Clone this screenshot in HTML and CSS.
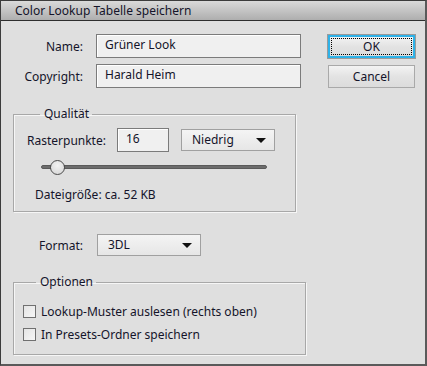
FILE: index.html
```html
<!DOCTYPE html>
<html lang="de">
<head>
    <meta charset="UTF-8">
    <title>Color Lookup Tabelle speichern</title>
    <link rel="stylesheet" href="styles.css">
</head>
<body>
    <div class="window">
        <div class="titlebar">Color Lookup Tabelle speichern</div>
        <div class="content">
            <div class="top">
                <div class="fields">
                    <div class="row">
                        <label class="label">Name:</label>
                        <div class="textbox wide">Grüner Look</div>
                    </div>
                    <div class="row">
                        <label class="label">Copyright:</label>
                        <div class="textbox wide">Harald Heim</div>
                    </div>
                </div>
                <div class="buttons">
                    <button class="btn default"><span class="focus">OK</span></button>
                    <button class="btn">Cancel</button>
                </div>
            </div>

            <fieldset class="group quality">
                <legend>Qualität</legend>
                <div class="raster-row">
                    <span class="raster-label">Rasterpunkte:</span>
                    <div class="textbox small">16</div>
                    <div class="select niedrig">Niedrig<span class="arrow"></span></div>
                </div>
                <div class="slider">
                    <div class="track"></div>
                    <div class="knob"></div>
                </div>
                <div class="filesize">Dateigröße: ca. 52 KB</div>
            </fieldset>

            <div class="row format-row">
                <label class="label">Format:</label>
                <div class="select format">3DL<span class="arrow"></span></div>
            </div>

            <fieldset class="group options">
                <legend>Optionen</legend>
                <div class="check"><span class="box"></span>Lookup-Muster auslesen (rechts oben)</div>
                <div class="check"><span class="box"></span>In Presets-Ordner speichern</div>
            </fieldset>
        </div>
    </div>
</body>
</html>
```

FILE: styles.css
```css
body {
    margin: 0;
    background: #dfdfdf;
    font-family: "Noto Sans", "DejaVu Sans", sans-serif;
    font-size: 12px;
    color: #14142a;
}
.window {
    width: 427px;
    height: 366px;
    box-sizing: border-box;
    border: 1px solid #3c3c3c;
    border-right-width: 2px;
    border-bottom-width: 2px;
    border-right-color: #5a5a5a;
    border-bottom-color: #5a5a5a;
    background: #dfdfdf;
}
.titlebar {
    height: 19px;
    line-height: 19px;
    padding-left: 14px;
    background: linear-gradient(#dadada, #aeaeae);
    border-bottom: 1px solid #2e2e2e;
    font-size: 12px;
}
.content {
    padding-top: 13px;
}
.top {
    display: flex;
}
.fields {
    display: flex;
    flex-direction: column;
    gap: 6px;
}
.row {
    display: flex;
    align-items: center;
}
.label {
    width: 82px;
    text-align: right;
    margin-right: 13px;
}
.textbox {
    box-sizing: border-box;
    height: 24px;
    line-height: 20px;
    padding-left: 8px;
    background: #f0f0f0;
    border: 1px solid #7b7b7b;
    box-shadow: inset 1px 1px 0 #fff;
}
.textbox.wide {
    width: 205px;
}
.buttons {
    display: flex;
    flex-direction: column;
    gap: 7px;
    margin-left: 27px;
    margin-top: 1px;
}
.btn {
    box-sizing: border-box;
    width: 87px;
    height: 23px;
    padding: 0;
    font: inherit;
    color: inherit;
    background: linear-gradient(#f3f3f3, #e3e3e3 50%, #dcdcdc);
    border: 1px solid #a9a9a9;
}
.btn.default {
    border: 2px solid #2eb2e8;
    box-shadow: 0 0 0 1px #9a9a9a;
    padding: 1px;
}
.btn .focus {
    display: block;
    height: 100%;
    box-sizing: border-box;
    border: 1px dotted #000;
    line-height: 15px;
}
.group {
    margin: 0 0 0 12px;
    padding: 0;
    border: 1px solid #a8a8a8;
    box-shadow: inset 1px 1px 0 #f6f6f6, 1px 1px 0 #f6f6f6;
    min-width: 0;
}
.group legend {
    margin-left: 13px;
    padding: 0 3px 0 4px;
    line-height: 16px;
}
.quality {
    width: 283px;
    box-sizing: border-box;
    margin-top: 18px;
    padding: 6px 0 8px 13px;
}
.raster-row {
    display: flex;
    align-items: center;
}
.raster-label {
    width: 90px;
}
.textbox.small {
    width: 52px;
}
.select {
    position: relative;
    box-sizing: border-box;
    height: 22px;
    line-height: 20px;
    padding-left: 10px;
    background: linear-gradient(#f4f4f4, #e6e6e6);
    border: 1px solid #a0a0a0;
}
.select .arrow {
    position: absolute;
    right: 8px;
    top: 8px;
    border-left: 5px solid transparent;
    border-right: 5px solid transparent;
    border-top: 5px solid #111;
}
.niedrig {
    width: 94px;
    margin-left: 12px;
}
.slider {
    position: relative;
    width: 226px;
    height: 15px;
    margin: 8px 0 0 14px;
}
.track {
    position: absolute;
    left: 0;
    right: 0;
    top: 5px;
    height: 4px;
    box-sizing: border-box;
    background: #6c6c6c;
    border: 1px solid #5a5a5a;
    border-radius: 2px;
}
.knob {
    position: absolute;
    left: 9px;
    top: 0;
    width: 15px;
    height: 15px;
    box-sizing: border-box;
    border-radius: 50%;
    border: 1px solid #4a4a4a;
    background: radial-gradient(circle at 50% 35%, #f2f2f2, #d4d4d4);
}
.filesize {
    margin: 12px 0 0 8px;
    line-height: 16px;
}
.format-row {
    margin-top: 22px;
}
.select.format {
    width: 104px;
    height: 22px;
    margin-left: 1px;
    padding-left: 10px;
}
.options {
    width: 293px;
    box-sizing: border-box;
    margin-top: 18px;
    padding: 11px 0 10px 9px;
    display: flex;
    flex-direction: column;
    gap: 3px;
}
.check {
    display: flex;
    align-items: center;
    height: 20px;
}
.check .box {
    width: 13px;
    height: 13px;
    box-sizing: border-box;
    border: 1px solid #707070;
    background: linear-gradient(135deg, #e4e4e4, #f6f6f6);
    margin-right: 5px;
}
```
